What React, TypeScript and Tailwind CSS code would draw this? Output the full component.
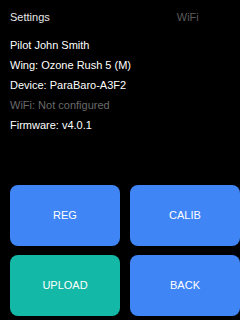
import React from "react";

export default function App() {
  const font = { fontFamily: '"Liberation Sans", Arial, sans-serif' };
  return (
    <div
      className="w-[240px] h-[320px] bg-black flex flex-col overflow-hidden text-[11px] text-white"
      style={font}
    >
      <div className="h-[34px] pl-[10px] flex items-center">
        <span className="text-[#e8e8e8]">Settings</span>
        <span className="ml-[127px] text-[#5a5a5a]">WiFi</span>
      </div>
      <div className="flex flex-col pl-[10px] leading-[20px] mt-[1px]">
        <div>Pilot John Smith</div>
        <div>Wing: Ozone Rush 5 (M)</div>
        <div>Device: ParaBaro-A3F2</div>
        <div className="text-[#6a6a6a]">WiFi: Not configured</div>
        <div>Firmware: v4.0.1</div>
      </div>
      <div className="mt-auto pb-[4px] pl-[10px] grid grid-cols-[110px_110px] grid-rows-[61px_61px] gap-[9px] gap-x-[10px]">
        <button className="rounded-[8px] bg-[#3f85f6] text-white text-[11px] flex items-center justify-center">REG</button>
        <button className="rounded-[8px] bg-[#3f85f6] text-white text-[11px] flex items-center justify-center">CALIB</button>
        <button className="rounded-[8px] bg-[#14b8a6] text-white text-[11px] flex items-center justify-center">UPLOAD</button>
        <button className="rounded-[8px] bg-[#3f85f6] text-white text-[11px] flex items-center justify-center">BACK</button>
      </div>
    </div>
  );
}
